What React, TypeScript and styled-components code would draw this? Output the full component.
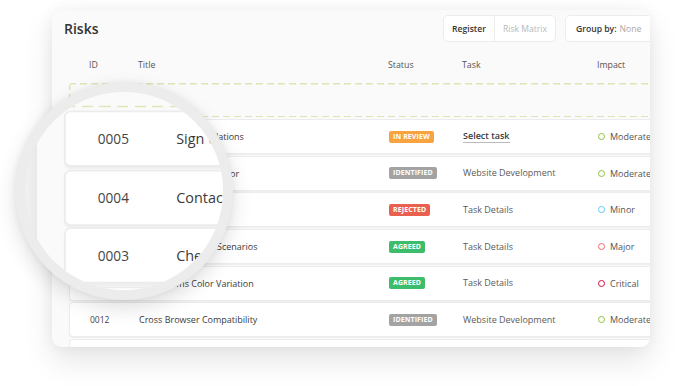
import React from "react";
import styled, { createGlobalStyle } from "styled-components";

const GlobalStyle = createGlobalStyle`
  html, body {
    margin: 0;
    padding: 0;
    background: #ffffff;
  }
  body {
    font-family: "Open Sans", "Noto Sans", sans-serif;
    color: #3a3a3a;
    -webkit-font-smoothing: antialiased;
  }
`;

type Status = "IN REVIEW" | "IDENTIFIED" | "REJECTED" | "AGREED";
type Impact = "Moderate" | "Minor" | "Major" | "Critical";

interface Risk {
  id: string;
  title: string;
  status: Status;
  task: string;
  impact: Impact;
  pick?: boolean;
}

const risks: Risk[] = [
  { id: "0005", title: "Sign Up Form Validations", status: "IN REVIEW", task: "Select task", impact: "Moderate", pick: true },
  { id: "0004", title: "Contact Page Text Color", status: "IDENTIFIED", task: "Website Development", impact: "Moderate" },
  { id: "0003", title: "Checkout Process", status: "REJECTED", task: "Task Details", impact: "Minor" },
  { id: "0002", title: "Payment Gateway Scenarios", status: "AGREED", task: "Task Details", impact: "Major" },
  { id: "0013", title: "Menu Items Color Variation", status: "AGREED", task: "Task Details", impact: "Critical" },
  { id: "0012", title: "Cross Browser Compatibility", status: "IDENTIFIED", task: "Website Development", impact: "Moderate" },
  { id: "0011", title: "Mobile Menu Layout", status: "AGREED", task: "Task Details", impact: "Minor" },
];

const statusColor: Record<Status, string> = {
  "IN REVIEW": "#f7a440",
  IDENTIFIED: "#a3a3a3",
  REJECTED: "#e9614e",
  AGREED: "#3dbd6b",
};

const impactColor: Record<Impact, string> = {
  Moderate: "#8cc43c",
  Minor: "#62c9f2",
  Major: "#f26a6a",
  Critical: "#d20f3c",
};

const Stage = styled.div`
  position: relative;
  width: 677px;
  height: 386px;
  padding: 10px 0 0 52px;
  box-sizing: border-box;
  overflow: hidden;
`;

const Card = styled.div`
  width: 598px;
  height: 337px;
  box-sizing: border-box;
  padding: 5px 0 0 17px;
  background: #fafafa;
  border-radius: 9px;
  box-shadow: 0 14px 30px rgba(0, 0, 0, 0.1), 0 0 14px rgba(0, 0, 0, 0.05);
  overflow: hidden;
`;

const Header = styled.div<{ $hidden?: boolean }>`
  display: flex;
  align-items: center;
  margin-left: -5px;
  margin-right: -10px;
  visibility: ${(p) => (p.$hidden ? "hidden" : "visible")};
`;

const Title = styled.h1`
  margin: 0;
  font-size: 14px;
  font-weight: 600;
  color: #333;
  line-height: 27px;
`;

const Toolbar = styled.div`
  margin-left: auto;
  display: flex;
  gap: 9px;
`;

const Segmented = styled.div`
  display: flex;
  height: 27px;
  background: #fff;
  border: 1px solid #ececec;
  border-radius: 5px;
  box-sizing: border-box;
`;

const Segment = styled.button<{ $active?: boolean }>`
  border: none;
  background: transparent;
  padding: 0 8px;
  font-family: inherit;
  font-size: 8.6px;
  font-weight: ${(p) => (p.$active ? 600 : 500)};
  color: ${(p) => (p.$active ? "#333" : "#b8b8b8")};
  & + & {
    border-left: 1px solid #ececec;
  }
`;

const GroupBy = styled.div`
  display: flex;
  align-items: center;
  height: 27px;
  width: 95px;
  box-sizing: border-box;
  padding-left: 10px;
  background: #fff;
  border: 1px solid #ececec;
  border-radius: 5px;
  font-size: 8.6px;
  font-weight: 600;
  color: #333;
  white-space: nowrap;
  span {
    font-weight: 500;
    color: #a8a8a8;
    margin-left: 3px;
  }
`;

const Columns = styled.div`
  display: grid;
  grid-template-columns: 49px 250px 74px 135px 1fr;
  align-items: center;
  padding-left: 20px;
  width: 600px;
  box-sizing: border-box;
`;

const ColumnHeader = styled(Columns)<{ $hidden?: boolean }>`
  height: 30px;
  margin-top: 8px;
  font-size: 8.8px;
  font-weight: 500;
  color: #555;
  visibility: ${(p) => (p.$hidden ? "hidden" : "visible")};
`;

const DropZone = styled.div`
  margin-top: 3px;
  width: 600px;
  height: 34px;
  border-radius: 4px;
  background-image:
    repeating-linear-gradient(to right, #d9e7b4 0 7px, transparent 7px 11px),
    repeating-linear-gradient(to right, #d9e7b4 0 7px, transparent 7px 11px),
    repeating-linear-gradient(to bottom, #d9e7b4 0 7px, transparent 7px 11px);
  background-size: 100% 1.5px, 100% 1.5px, 1.5px 100%;
  background-position: left top, left bottom, left top;
  background-repeat: no-repeat;
`;

const List = styled.div`
  margin-top: 2px;
  display: flex;
  flex-direction: column;
  gap: 1.7px;
`;

const Row = styled(Columns)`
  height: 35px;
  background: #fff;
  border: 1px solid #ececec;
  border-radius: 4px;
  box-shadow: 0 1px 1px rgba(0, 0, 0, 0.05);
  font-size: 9px;
  color: #3a3a3a;
`;

const IdCell = styled.div`
  font-size: 8.5px;
  font-weight: 500;
  color: #444;
`;

const TitleCell = styled.div`
  font-weight: 500;
  white-space: nowrap;
`;

const Badge = styled.span<{ $color: string }>`
  justify-self: start;
  display: inline-block;
  height: 12px;
  line-height: 12px;
  padding: 0 4px;
  border-radius: 2px;
  background: ${(p) => p.$color};
  color: #fff;
  font-size: 7px;
  font-weight: 700;
  letter-spacing: 0.1px;
`;

const TaskCell = styled.div<{ $pick?: boolean }>`
  justify-self: start;
  color: ${(p) => (p.$pick ? "#3a3a3a" : "#5a5a5a")};
  font-weight: ${(p) => (p.$pick ? 600 : 400)};
  border-bottom: ${(p) => (p.$pick ? "1px solid #bbb" : "none")};
  line-height: 12px;
  white-space: nowrap;
`;

const ImpactCell = styled.div`
  display: flex;
  align-items: center;
  gap: 5px;
  color: #555;
  white-space: nowrap;
`;

const Dot = styled.span<{ $color: string }>`
  width: 7px;
  height: 7px;
  box-sizing: border-box;
  border-radius: 50%;
  border: 1.6px solid ${(p) => p.$color};
`;

const Magnifier = styled.div`
  position: absolute;
  left: 15px;
  top: 82px;
  width: 218px;
  height: 218px;
  box-sizing: border-box;
  border: 10px solid #ececec;
  border-radius: 50%;
  overflow: hidden;
  background: #fafafa;
  box-shadow: 0 8px 20px rgba(0, 0, 0, 0.13), 0 0 6px rgba(0, 0, 0, 0.05);
`;

const Lens = styled.div`
  position: absolute;
  left: 27px;
  top: -82px;
  transform: scale(1.6);
  transform-origin: 25px 123px;
  pointer-events: none;
`;

function Board({ lens }: { lens?: boolean }) {
  const rows = lens ? risks.slice(0, 4) : risks;
  return (
    <Card>
      <Header $hidden={lens}>
        <Title>Risks</Title>
        <Toolbar>
          <Segmented>
            <Segment $active>Register</Segment>
            <Segment>Risk Matrix</Segment>
          </Segmented>
          <GroupBy>
            Group by:<span>None</span>
          </GroupBy>
        </Toolbar>
      </Header>
      <ColumnHeader $hidden={lens}>
        <div>ID</div>
        <div>Title</div>
        <div>Status</div>
        <div>Task</div>
        <div>Impact</div>
      </ColumnHeader>
      <DropZone />
      <List>
        {rows.map((r) => (
          <Row key={r.id}>
            <IdCell>{r.id}</IdCell>
            <TitleCell>{r.title}</TitleCell>
            <Badge $color={statusColor[r.status]}>{r.status}</Badge>
            <TaskCell $pick={r.pick}>{r.task}</TaskCell>
            <ImpactCell>
              <Dot $color={impactColor[r.impact]} />
              {r.impact}
            </ImpactCell>
          </Row>
        ))}
      </List>
    </Card>
  );
}

export default function App() {
  return (
    <>
      <GlobalStyle />
      <Stage>
        <Board />
        <Magnifier aria-hidden>
          <Lens>
            <Board lens />
          </Lens>
        </Magnifier>
      </Stage>
    </>
  );
}
